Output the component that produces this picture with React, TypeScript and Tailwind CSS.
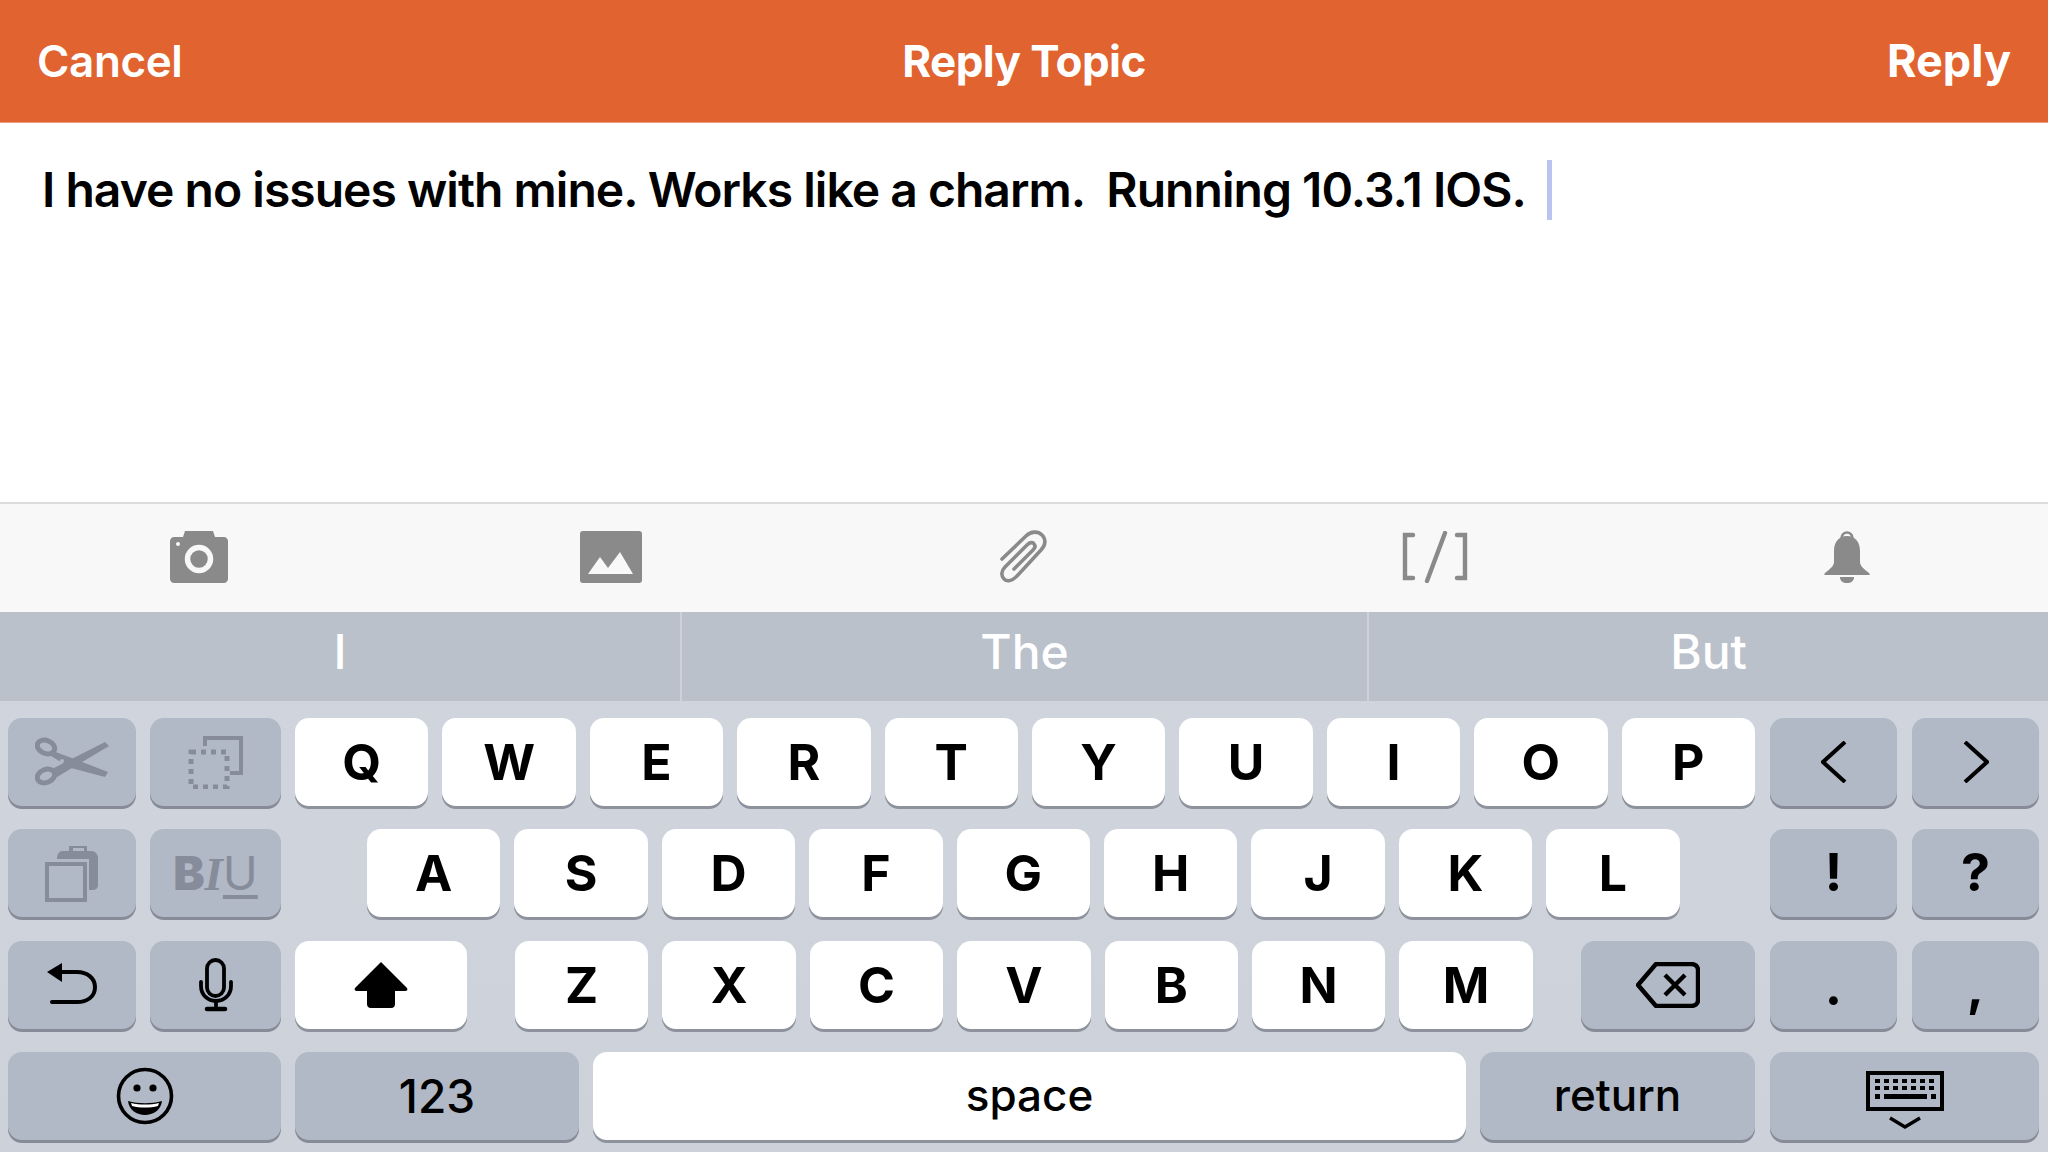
const font = 'font-["Inter",sans-serif]';

type KeyProps = {
  width: string;
  light?: boolean;
  children: React.ReactNode;
};

function Key({ width, light, children }: KeyProps) {
  return (
    <div
      className={`${width} h-[88px] shrink-0 rounded-[14px] flex items-center justify-center text-black ${
        light
          ? 'bg-white shadow-[0_3px_0_#8e929c]'
          : 'bg-[#b1b8c6] shadow-[0_3px_0_#868b97]'
      }`}
    >
      {children}
    </div>
  );
}

function Letter({ label }: { label: string }) {
  return (
    <Key width="w-[133.4px]" light>
      <span className="text-[50px] font-bold leading-none">{label}</span>
    </Key>
  );
}

const ScissorsIcon = () => (
  <svg width="74" height="50" viewBox="0 0 74 50" fill="none">
    <g stroke="#868c99" strokeWidth="5">
      <ellipse cx="11" cy="10" rx="9" ry="6.5" transform="rotate(22 11 10)" />
      <ellipse cx="11" cy="39" rx="9" ry="6.5" transform="rotate(-22 11 39)" />
    </g>
    <path d="M17 32L70 5L74 9L22 40Z" fill="#868c99" />
    <path d="M18 14L42 23L73 35L70 40L36 31L16 19Z" fill="#868c99" />
    <circle cx="27" cy="24" r="2" fill="#b1b8c6" />
  </svg>
);

const SelectIcon = () => (
  <svg width="56" height="54" viewBox="0 0 56 54" fill="none">
    <rect x="3" y="17" width="36" height="35" stroke="#868c99" strokeWidth="5" strokeDasharray="5 5" />
    <path d="M17 11V3H53V38H42" stroke="#868c99" strokeWidth="4" />
  </svg>
);

const PasteIcon = () => (
  <svg width="54" height="57" viewBox="0 0 54 57" fill="none">
    <path
      d="M12 14C12 9 14 6 18 6H24V1H42V6H46C50 6 53 9 53 13V40C53 43 51 45 47 45H44V14Z"
      fill="#868c99"
    />
    <rect x="28" y="3" width="11" height="3" fill="#b1b8c6" />
    <rect x="2" y="19" width="38" height="36" fill="#b1b8c6" stroke="#868c99" strokeWidth="4" />
  </svg>
);

const UndoIcon = () => (
  <svg width="50" height="44" viewBox="0 0 50 44" fill="none">
    <path d="M0 9L15 0V19Z" fill="#000" />
    <path d="M12 9H30C40 9 48 15 48 24C48 34 40 39 30 39H5" stroke="#000" strokeWidth="4" strokeLinecap="round" />
  </svg>
);

const MicIcon = () => (
  <svg width="34" height="54" viewBox="0 0 34 54" fill="none">
    <rect x="8" y="2" width="17" height="36" rx="8.5" stroke="#000" strokeWidth="3.8" />
    <path d="M2 24V28C2 37 9 43 17 43C25 43 32 37 32 28V24" stroke="#000" strokeWidth="3.8" strokeLinecap="round" />
    <path d="M17 43V50" stroke="#000" strokeWidth="3.8" />
    <path d="M8 51H26" stroke="#000" strokeWidth="4.5" strokeLinecap="round" />
  </svg>
);

const ShiftIcon = () => (
  <svg width="54" height="46" viewBox="0 0 54 46" fill="#000">
    <path d="M27 0L53 26C54 28 53 29 51 29H41V42C41 44 40 46 37 46H17C14 46 13 44 13 42V29H3C1 29 0 28 1 26Z" />
  </svg>
);

const BackspaceIcon = () => (
  <svg width="64" height="46" viewBox="0 0 64 46" fill="none">
    <path
      d="M20 2H55C59 2 62 4 62 8V38C62 42 59 44 55 44H20L2 23Z"
      stroke="#000"
      strokeWidth="4.4"
      strokeLinejoin="round"
    />
    <path d="M29 13L49 33M49 13L29 33" stroke="#000" strokeWidth="4.4" />
  </svg>
);

const EmojiIcon = () => (
  <svg width="58" height="58" viewBox="0 0 58 58" fill="none">
    <circle cx="29" cy="29" r="26.5" stroke="#000" strokeWidth="3.6" />
    <circle cx="21" cy="21" r="3.6" fill="#000" />
    <circle cx="37" cy="21" r="3.6" fill="#000" />
    <path d="M12 34C22 37 36 37 46 34C45 43 37 48 29 48C21 48 13 43 12 34Z" fill="#000" />
    <path d="M15 36C24 38 34 38 43 36L42 39C34 41 24 41 16 39Z" fill="#fff" />
  </svg>
);

const KeyboardIcon = () => {
  const dots: React.ReactNode[] = [];
  for (let row = 0; row < 2; row++) {
    for (let col = 0; col < 7; col++) {
      dots.push(
        <rect key={`${row}-${col}`} x={9 + col * 9} y={8 + row * 7} width="5" height="4" fill="#000" />
      );
    }
  }
  return (
    <svg width="78" height="62" viewBox="0 0 78 62" fill="none" className="mt-[12px]">
      <rect x="2" y="2" width="74" height="36" stroke="#000" strokeWidth="4" />
      {dots}
      <rect x="9" y="23" width="5" height="5" fill="#000" />
      <rect x="18" y="23" width="43" height="5" fill="#000" />
      <rect x="65" y="23" width="5" height="5" fill="#000" />
      <path d="M24 47L39 56L54 47" stroke="#000" strokeWidth="3.4" />
    </svg>
  );
};

const CameraIcon = () => (
  <svg width="58" height="52" viewBox="0 0 58 52" fill="none">
    <path
      d="M4 6H13L15 0H43L45 6H54C56 6 58 8 58 10V48C58 50 56 52 54 52H4C2 52 0 50 0 48V10C0 8 2 6 4 6Z"
      fill="#8a8a8a"
    />
    <circle cx="29" cy="28" r="11.5" stroke="#f8f8f8" strokeWidth="5.5" />
    <circle cx="8" cy="13" r="2" fill="#f8f8f8" />
  </svg>
);

const ImageIcon = () => (
  <svg width="62" height="52" viewBox="0 0 62 52">
    <rect width="62" height="52" rx="3" fill="#8a8a8a" />
    <path d="M8 43L20 26L28 37L40 21L53 43Z" fill="#f8f8f8" />
  </svg>
);

const ClipIcon = () => (
  <svg width="48" height="54" viewBox="0 0 48 54" fill="none">
    <path
      d="M3 29L27 6C32 1 39 1 43 5C47 9 47 15 42 20L18 46C13 51 8 52 5 49C2 46 2 41 6 37L28 15C31 12 34 12 35 14C37 16 36 18 34 20L15 39"
      stroke="#8a8a8a"
      strokeWidth="3.6"
      strokeLinecap="round"
    />
  </svg>
);

const CodeIcon = () => (
  <svg width="66" height="52" viewBox="0 0 66 52" fill="none" stroke="#8a8a8a" strokeWidth="4.4" strokeLinecap="round">
    <path d="M11 4H3V47H11" />
    <path d="M43 2L25 50" />
    <path d="M55 4H63V47H55" />
  </svg>
);

const BellIcon = () => (
  <svg width="46" height="52" viewBox="0 0 46 52" fill="none">
    <circle cx="23" cy="7" r="5.5" stroke="#8a8a8a" strokeWidth="2.5" />
    <path
      d="M23 5C32 5 36 12 36 20V31C36 35 40 38 45 42C46 43 46 44 45 44H1C0 44 0 43 1 42C6 38 10 35 10 31V20C10 12 14 5 23 5Z"
      fill="#8a8a8a"
    />
    <path d="M16 46H30C30 50 27 52 23 52C19 52 16 50 16 46Z" fill="#8a8a8a" />
  </svg>
);

const ChevronIcon = ({ flip }: { flip?: boolean }) => (
  <svg width="26" height="42" viewBox="0 0 26 42" fill="none" className={flip ? 'rotate-180' : ''}>
    <path d="M24 1L2 21L24 41" stroke="#000" strokeWidth="4" />
  </svg>
);

const toolbarIcons = [
  <CameraIcon key="camera" />,
  <ImageIcon key="image" />,
  <ClipIcon key="clip" />,
  <CodeIcon key="code" />,
  <BellIcon key="bell" />,
];

export default function App() {
  return (
    <div className={`${font} w-[2048px] h-[1152px] overflow-hidden flex flex-col bg-white`}>
      <header className="h-[123px] shrink-0 bg-[#e06330] flex items-center justify-between px-[37px] text-white text-[44px] font-bold border-b border-[#e9a184]">
        <span className="font-semibold tracking-[-0.4px] w-[300px]">Cancel</span>
        <span className="tracking-[-0.6px]">Reply Topic</span>
        <span className="w-[300px] text-right text-[45px]">Reply</span>
      </header>

      <div className="h-[379px] shrink-0 px-[42px] pt-[35px]">
        <div className="flex items-center h-[64px] text-[48px] font-semibold tracking-[-0.97px] text-black whitespace-pre">
          <span>I have no issues with mine. Works like a charm.  Running 10.3.1 IOS.</span>
          <span className="w-[5px] h-[60px] ml-[21px] bg-[#b9c5ee]" />
        </div>
      </div>

      <div className="h-[110px] shrink-0 bg-[#f8f8f8] border-t-2 border-[#dcdcdc] flex justify-center items-center pb-[3px] pr-[2px]">
        {toolbarIcons.map((icon, i) => (
          <div key={i} className="w-[412px] shrink-0 flex justify-center">
            {icon}
          </div>
        ))}
      </div>

      <div className="h-[89px] shrink-0 bg-[#bac1cb] flex text-white text-[48px] font-medium pb-[10px]">
        <div className="w-[680px] flex items-center justify-center">I</div>
        <div className="w-[689px] -mb-[10px] pb-[10px] border-x-2 border-[#cdd2da] flex items-center justify-center">The</div>
        <div className="flex-1 flex items-center justify-center">But</div>
      </div>

      <div className="flex-1 bg-gradient-to-b from-[#cfd4dd] to-[#ccd1da] pt-[17px] pl-[8px] pr-[9px] flex flex-col gap-[23.3px]">
        <div className="flex gap-[14px]">
          <Key width="w-[128px]"><ScissorsIcon /></Key>
          <Key width="w-[131px]"><SelectIcon /></Key>
          {'QWERTYUIOP'.split('').map((l) => (
            <Letter key={l} label={l} />
          ))}
          <div className="ml-auto flex gap-[15px]">
            <Key width="w-[127px]"><ChevronIcon /></Key>
            <Key width="w-[127px]"><ChevronIcon flip /></Key>
          </div>
        </div>

        <div className="flex gap-[14px]">
          <Key width="w-[128px]"><PasteIcon /></Key>
          <Key width="w-[131px]">
            <div className="flex items-baseline text-[#868c99] text-[47px] leading-none">
              <span className="font-black">B</span>
              <span className='font-["Liberation_Serif",serif] italic font-bold'>I</span>
              <span className="font-normal underline decoration-[4px] underline-offset-[5px]">U</span>
            </div>
          </Key>
          <div className="ml-[72px] flex gap-[14px]">
            {'ASDFGHJKL'.split('').map((l) => (
              <Letter key={l} label={l} />
            ))}
          </div>
          <div className="ml-auto flex gap-[15px]">
            <Key width="w-[127px]"><span className="text-[52px] font-bold leading-none">!</span></Key>
            <Key width="w-[127px]"><span className="text-[52px] font-bold leading-none">?</span></Key>
          </div>
        </div>

        <div className="flex gap-[14px]">
          <Key width="w-[128px]"><UndoIcon /></Key>
          <Key width="w-[131px]"><MicIcon /></Key>
          <Key width="w-[172px]" light><ShiftIcon /></Key>
          <div className="ml-[34px] flex gap-[14px]">
            {'ZXCVBNM'.split('').map((l) => (
              <Letter key={l} label={l} />
            ))}
          </div>
          <div className="ml-auto flex gap-[15px]">
            <Key width="w-[174px]"><BackspaceIcon /></Key>
            <Key width="w-[127px]"><span className="text-[52px] font-bold leading-none pt-[4px]">.</span></Key>
            <Key width="w-[127px]"><span className="text-[52px] font-bold leading-none pt-[4px]">,</span></Key>
          </div>
        </div>

        <div className="flex gap-[14px]">
          <Key width="w-[273px]"><EmojiIcon /></Key>
          <Key width="w-[284px]"><span className="text-[46px] font-medium leading-none">123</span></Key>
          <Key width="w-[873px]" light><span className="text-[44px] font-medium leading-none pb-[2px]">space</span></Key>
          <Key width="w-[275px]"><span className="text-[44px] font-medium leading-none pb-[2px]">return</span></Key>
          <div className="ml-auto">
            <Key width="w-[269px]"><KeyboardIcon /></Key>
          </div>
        </div>
      </div>
    </div>
  );
}
